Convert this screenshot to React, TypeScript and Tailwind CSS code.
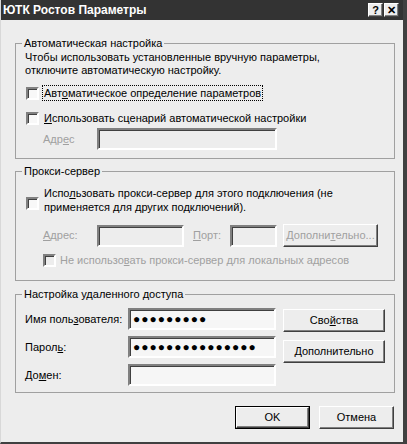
import type { ReactNode } from 'react'

// классические "объемные" рамки Windows
const sunken =
  'border-2 border-t-[#808080] border-l-[#808080] border-b-white border-r-white shadow-[inset_1px_1px_0_#404040]'
const raised =
  'border border-t-white border-l-white border-b-[#404040] border-r-[#404040] shadow-[inset_-1px_-1px_0_#808080]'

function Check({ disabled }: { disabled?: boolean }) {
  return (
    <span
      className={`block w-[13px] h-[13px] shrink-0 ${sunken} ${disabled ? 'bg-[#ededed]' : 'bg-[#f8f8f8]'}`}
    />
  )
}

function Field({ w, disabled, value }: { w: string; disabled?: boolean; value?: string }) {
  return (
    <div
      className={`${w} h-[22px] ${sunken} ${disabled ? 'bg-[#ededed]' : 'bg-[#f6f6f6]'} flex items-center px-[3px] text-[12px] tracking-[1px] leading-none`}
    >
      {value}
    </div>
  )
}

function Btn({ children, w, h = 'h-[23px]', disabled, isDefault }: { children: ReactNode; w: string; h?: string; disabled?: boolean; isDefault?: boolean }) {
  const inner = (
    <div
      className={`w-full h-full ${raised} bg-[#ededed] flex items-center justify-center ${disabled ? 'text-[#a0a0a0]' : ''}`}
    >
      {children}
    </div>
  )
  return isDefault ? (
    <div className={`${w} ${h} border border-black`}>{inner}</div>
  ) : (
    <div className={`${w} ${h}`}>{inner}</div>
  )
}

function Group({ title, className, children }: { title: string; className?: string; children: ReactNode }) {
  return (
    <fieldset className={`ml-[14px] w-[380px] border border-[#a0a0a0] ${className ?? ''}`}>
      <legend className="ml-[6px] px-[2px] leading-[13px]">{title}</legend>
      {children}
    </fieldset>
  )
}

export default function App() {
  return (
    <div className="w-[407px] h-[444px] bg-[#ededed] flex flex-col font-['Liberation_Sans',Arial,sans-serif] text-[11px] text-black border-l border-l-[#d8d8d8] border-r-4 border-r-[#404040] border-b-2 border-b-[#404040] overflow-hidden">
      {/* заголовок окна */}
      <div className="h-[20px] bg-[#333333] flex items-center pl-[2px] pr-[4px]">
        <span className="text-white font-bold text-[12px] leading-none">ЮТК Ростов Параметры</span>
        <div className="ml-auto flex gap-[1px]">
          <div className={`w-[15px] h-[14px] ${raised} bg-[#ededed] flex items-center justify-center text-[11px] font-bold leading-none`}>?</div>
          <div className={`w-[15px] h-[14px] ${raised} bg-[#ededed] flex items-center justify-center text-[11px] font-bold leading-none`}>✕</div>
        </div>
      </div>

      <Group title="Автоматическая настройка" className="mt-[17px] pb-[8px]">
        <div className="pl-[9px] mt-[1px] leading-[13px]">
          Чтобы использовать установленные вручную параметры,
          <br />
          отключите автоматическую настройку.
        </div>
        <div className="pl-[10px] mt-[8px] h-[16px] flex items-center gap-[4px]">
          <Check />
          <span className="px-[1px] leading-[14px] outline-1 outline-dotted outline-black">
            Авт<u>о</u>матическое определение параметров
          </span>
        </div>
        <div className="pl-[10px] mt-[9px] h-[16px] flex items-center gap-[5px]">
          <Check />
          <span>
            <u>И</u>спользовать сценарий автоматической настройки
          </span>
        </div>
        <div className="pl-[27px] mt-[2px] flex items-center">
          <span className="w-[54px] text-[#a0a0a0]">
            Адр<u>е</u>с
          </span>
          <Field w="w-[180px]" disabled />
        </div>
      </Group>

      <Group title="Прокси-сервер" className="mt-[6px] pb-[13px]">
        <div className="pl-[10px] mt-[8px] flex gap-[5px]">
          <div className="mt-[11px]">
            <Check />
          </div>
          <div className="leading-[14px]">
            Испо<u>л</u>ьзовать прокси-сервер для этого подключения (не
            <br />
            применяется для других подключений).
          </div>
        </div>
        <div className="pl-[27px] mt-[10px] flex items-center text-[#a0a0a0]">
          <span className="w-[54px]">
            <u>А</u>дрес:
          </span>
          <Field w="w-[87px]" disabled />
          <span className="ml-[9px] w-[37px]">
            <u>П</u>орт:
          </span>
          <Field w="w-[47px]" disabled />
          <div className="ml-[6px]">
            <Btn w="w-[95px]" disabled>
              Дополни<u>т</u>ельно...
            </Btn>
          </div>
        </div>
        <div className="pl-[27px] mt-[6px] h-[14px] flex items-center gap-[4px] text-[#a0a0a0]">
          <Check disabled />
          <span>
            Не использо<u>в</u>ать прокси-сервер для локальных адресов
          </span>
        </div>
      </Group>

      <Group title="Настройка удаленного доступа" className="mt-[7px] pb-[6px]">
        <div className="mt-[7px] flex">
          <div className="pl-[9px] flex flex-col gap-[6px]">
            <div className="flex items-center">
              <span className="w-[103px]">
                Имя поль<u>з</u>ователя:
              </span>
              <Field w="w-[148px]" value="●●●●●●●●●" />
            </div>
            <div className="flex items-center">
              <span className="w-[103px]">
                Парол<u>ь</u>:
              </span>
              <Field w="w-[148px]" value="●●●●●●●●●●●●●●●" />
            </div>
            <div className="flex items-center">
              <span className="w-[103px]">
                До<u>м</u>ен:
              </span>
              <Field w="w-[148px]" />
            </div>
          </div>
          <div className="ml-[7px] mt-[1px] flex flex-col gap-[8px]">
            <Btn w="w-[102px]">
              Сво<u>й</u>ства
            </Btn>
            <Btn w="w-[102px]">
              <u>Д</u>ополнительно
            </Btn>
          </div>
        </div>
      </Group>

      <div className="mt-[13px] pr-[9px] flex justify-end gap-[9px]">
        <Btn w="w-[75px]" isDefault>
          OK
        </Btn>
        <Btn w="w-[75px]">Отмена</Btn>
      </div>
    </div>
  )
}
